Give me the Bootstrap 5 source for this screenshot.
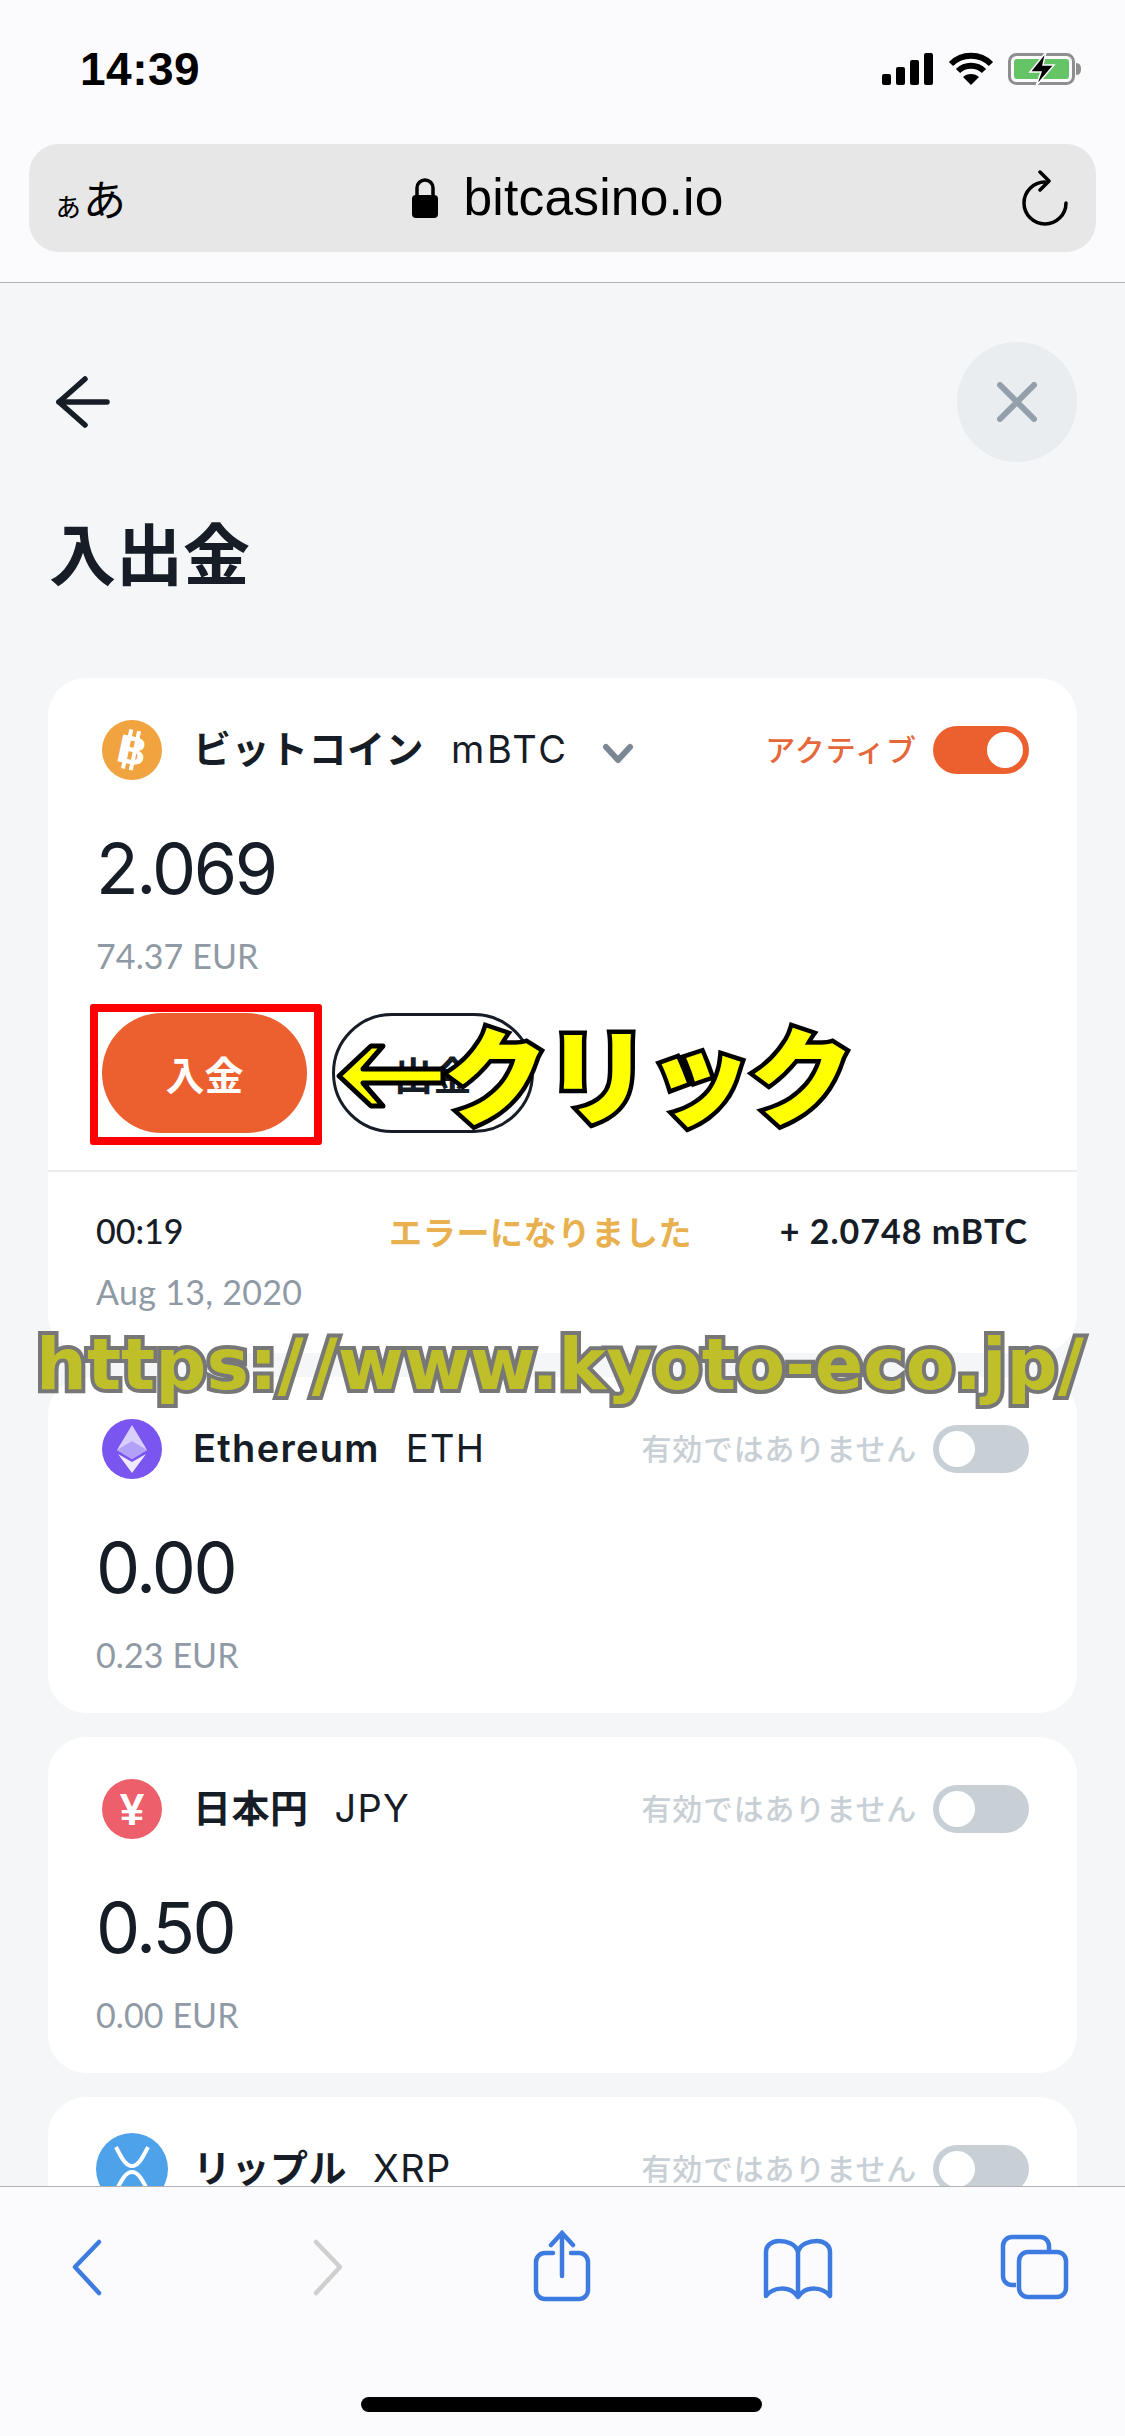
<!DOCTYPE html>
<html lang="ja">
<head>
<meta charset="utf-8">
<title>入出金</title>
<link href="https://cdn.jsdelivr.net/npm/bootstrap@5.3.0/dist/css/bootstrap.min.css" rel="stylesheet">
<style>
html,body{margin:0;background:#f4f6f8;}
body{font-family:"Lato","Noto Sans CJK JP",sans-serif;color:#171d26;}
.phone{width:1125px;height:2436px;overflow:hidden;position:relative;}
.topbar{background:#fbfbfd;height:283px;border-bottom:1px solid #b2b2b4;flex:none;}
.statusrow{height:138px;padding:0 43px 0 80px;margin-bottom:6px;}
.statusicons{gap:14px;}
.clock{font:700 46px/1 "Liberation Sans",sans-serif;color:#000;letter-spacing:.5px;}
.urlbar{margin:0 29px;height:108px;border-radius:30px;background:#e7e7e7;padding:0 27px 0 24px;position:relative;}
.aa{font:400 43px/1 "Noto Sans CJK JP",sans-serif;color:#000;width:70px;white-space:nowrap;margin-top:-2px;}
.aa small{font-size:30px;}
.host{font:400 51.500px/1 "Liberation Sans",sans-serif;color:#000;letter-spacing:.2px;}
.hostwrap{flex:1;gap:24px;margin-left:-9px;}
.content{flex:1;min-height:0;overflow:hidden;padding:59px 48px 0;}
.round-x{width:120px;height:120px;border-radius:50%;background:#e9edf0;border:0;padding:0;}
.backarrow{margin-left:7px;}
.pagetitle{font:700 67px/80px "Noto Sans CJK JP",sans-serif;margin:49px 0 87px 1px;color:#171d26;}
.wallet{border:0;border-radius:38px;background:#fff;margin-bottom:24px;flex:none;}
.wallet-body{padding:42px 48px 38px;}
.wallet-main{padding-bottom:37px;}
.coin{width:72px;height:60px;flex:none;}
.coin-lg{height:72px;margin:-6px 0;}
.coinname{font-family:"Inter","Noto Sans CJK JP",sans-serif;font-size:38px;font-weight:600;line-height:60px;margin-left:25px;letter-spacing:.5px;margin-top:-2px;}
.coinname.latin{letter-spacing:1.300px;}
.coincode{font-family:"Inter","Noto Sans CJK JP",sans-serif;font-size:38px;font-weight:400;line-height:60px;margin-left:26px;margin-top:-2px;letter-spacing:1.300px;}
.coincode.mbtc{letter-spacing:2.600px;margin-left:27px;}
.chev{margin-left:30px;margin-top:8px;}
.state{font:500 30px/40px "Noto Sans CJK JP",sans-serif;margin-right:16px;margin-top:-5px;}
.state-on{color:#e5683a;letter-spacing:1px;}
.state-off{color:#c8d0d6;letter-spacing:.7px;}
.form-check.tgl{padding:0;margin:0;min-height:0;height:48px;}
.form-check-input.tgl-input{width:96px;height:48px;margin:0;border:0;border-radius:24px;background-color:#c8d0d6;float:none;display:block;box-shadow:none;
background-image:url("data:image/svg+xml,%3csvg xmlns='http://www.w3.org/2000/svg' viewBox='-4 -4 8 8'%3e%3ccircle r='3' fill='%23fff'/%3e%3c/svg%3e");}
.form-check-input.tgl-input:checked{background-color:#ec5f2f;}
.amount{font-family:"Inter",sans-serif;font-size:70px;line-height:70px;font-weight:400;margin-top:54px;letter-spacing:-2.500px;}
.fiat{font-size:34px;line-height:40px;color:#8f9aa5;margin-top:32px;letter-spacing:.1px;}
.actions{margin:37px 0 0 6px;gap:25px;position:relative;}
.btn.pay{width:205px;height:120px;border-radius:60px;background:#ec5f2f;border:0;color:#fff;font:700 39px/1 "Noto Sans CJK JP",sans-serif;padding:0;}
.btn.out{width:202px;height:120px;border-radius:60px;background:#fff;border:3px solid #171d26;color:#171d26;font:700 39px/1 "Noto Sans CJK JP",sans-serif;padding:0;}
.redbox{position:absolute;left:-12px;top:-9px;width:232px;height:141px;border:8px solid #f00;border-radius:3px;pointer-events:none;}
.clicknote{position:absolute;left:341px;top:-8px;font:900 105px/130px "Noto Sans CJK JP",sans-serif;color:#ff0;-webkit-text-stroke:9px #000;paint-order:stroke fill;letter-spacing:-3px;white-space:nowrap;}
.clickarrow{position:absolute;left:233px;top:30px;}
.tx{border-top:2px solid #e9edf0;padding:39px 48px 41px;}
.tx-line{font-size:34px;line-height:40px;font-weight:500;}
.tx-time{width:293px;}
.tx-stat{font:700 33px/40px "Noto Sans CJK JP",sans-serif;color:#e9b04f;letter-spacing:.7px;}
.tx-amt{font-weight:700;letter-spacing:1px;margin-right:1px;}
.tx-date{font-size:34px;line-height:40px;color:#8f9aa5;margin-top:21px;letter-spacing:.3px;}
.bottombar{background:#fbfbfd;height:250px;border-top:1px solid #b2b2b4;flex:none;position:relative;}
.tools{display:grid;grid-template-columns:172px 314px 152px 320px 152px;padding-top:43px;}
.tool{height:72px;}
.homebar{width:401px;height:15px;border-radius:8px;background:#000;margin:95px auto 0;transform:translateX(-1px);}
.watermark{position:absolute;left:36px;top:1315px;font:700 71.500px/100px "DejaVu Sans",sans-serif;color:#bfbf2a;-webkit-text-stroke:8px #777;paint-order:stroke fill;white-space:nowrap;}
.slashgap{letter-spacing:8px;}
</style>
</head>
<body>
<div class="phone d-flex flex-column">
  <header class="topbar">
    <div class="statusrow d-flex align-items-center justify-content-between">
      <span class="clock">14:39</span>
      <div class="statusicons d-flex align-items-center">
        <svg width="52" height="32" viewBox="0 0 52 32"><rect x="0" y="21" width="9" height="11" rx="2"/><rect x="14" y="14" width="9" height="18" rx="2"/><rect x="28" y="7" width="9" height="25" rx="2"/><rect x="42" y="0" width="9" height="32" rx="2"/></svg>
        <svg width="46" height="34" viewBox="0 0 46 34" fill="none" stroke="#000" stroke-width="6"><path d="M3 12C14 1 32 1 43 12"/><path d="M10 19C17 12 29 12 36 19"/><path d="M23 33L15 25C19 21 27 21 31 25Z" fill="#000" stroke="none"/></svg>
        <svg width="74" height="34" viewBox="0 0 74 34"><rect x="1.5" y="2.500" width="64" height="29" rx="7" fill="none" stroke="#8e8e8e" stroke-width="3"/><rect x="6" y="7" width="55" height="20" rx="3" fill="#65c466"/><path d="M68 11c4 0 5 3 5 6s-1 6-5 6z" fill="#8e8e8e"/><path d="M38 0 L22 20 H33 L28 34 L46 13 H35Z" fill="#000" stroke="#fbfbfd" stroke-width="1.500"/></svg>
      </div>
    </div>
    <div class="urlbar d-flex align-items-center">
      <span class="aa"><small>ぁ</small>あ</span>
      <div class="hostwrap d-flex align-items-center justify-content-center">
        <svg width="28" height="40" viewBox="0 0 28 40"><path d="M6 18V10a8 8 0 0 1 16 0v8" fill="none" stroke="#000" stroke-width="3.500"/><rect x="1" y="17" width="26" height="23" rx="4"/></svg>
        <span class="host">bitcasino.io</span>
      </div>
      <svg width="48" height="56" viewBox="0 0 48 56" fill="none" stroke="#000" stroke-width="3.500" stroke-linecap="round" stroke-linejoin="round"><path d="M24 12A21 21 0 1 0 45 33"/><path d="M19 2L28 11L19 20"/></svg>
    </div>
  </header>

  <main class="content d-flex flex-column">
    <div class="d-flex align-items-center justify-content-between flex-none">
      <svg class="backarrow" width="56" height="52" viewBox="0 0 56 52" fill="none" stroke="#171d26" stroke-width="5.500" stroke-linecap="round" stroke-linejoin="round"><path d="M52 26H4"/><path d="M30 3L4 26L30 49"/></svg>
      <button class="round-x d-flex align-items-center justify-content-center" type="button" aria-label="閉じる"><svg width="40" height="40" viewBox="0 0 40 40" stroke="#939faa" stroke-width="6" stroke-linecap="round"><path d="M3 3L37 37M37 3L3 37"/></svg></button>
    </div>
    <h1 class="pagetitle">入出金</h1>

    <section class="card wallet">
      <div class="wallet-body wallet-main">
        <div class="d-flex align-items-center">
          <svg class="coin" viewBox="0 0 72 60"><circle cx="36" cy="30" r="30" fill="#f0a33f"/><g transform="rotate(12 36 30)" fill="#fff"><text x="36" y="44" text-anchor="middle" font-family="Liberation Sans" font-weight="700" font-size="40">B</text><rect x="29" y="10" width="4" height="40"/><rect x="37" y="10" width="4" height="40"/></g></svg>
          <span class="coinname">ビットコイン</span><span class="coincode mbtc">mBTC</span>
          <svg class="chev" width="38" height="24" viewBox="0 0 38 24" fill="none" stroke="#7b8894" stroke-width="6" stroke-linecap="round" stroke-linejoin="round"><path d="M7 5L19 18L31 5"/></svg>
          <span class="state state-on ms-auto">アクティブ</span>
          <div class="form-check form-switch tgl"><input class="form-check-input tgl-input" type="checkbox" role="switch" checked aria-label="アクティブ"></div>
        </div>
        <div class="amount">2.069</div>
        <div class="fiat">74.37 EUR</div>
        <div class="actions d-flex">
          <button class="btn pay d-flex align-items-center justify-content-center" type="button">入金</button>
          <button class="btn out d-flex align-items-center justify-content-center" type="button">出金</button>
          <div class="redbox"></div>
          <svg class="clickarrow" width="112" height="66" viewBox="0 0 112 66"><path d="M36 3L4 33L36 63H48L28 40H108V26H28L48 3Z" fill="#ff0" stroke="#000" stroke-width="5" stroke-linejoin="round"/></svg>
          <div class="clicknote">クリック</div>
        </div>
      </div>
      <div class="tx">
        <div class="tx-line d-flex align-items-center">
          <span class="tx-time">00:19</span>
          <span class="tx-stat">エラーになりました</span>
          <span class="tx-amt ms-auto">+ 2.0748 mBTC</span>
        </div>
        <div class="tx-date">Aug 13, 2020</div>
      </div>
    </section>

    <section class="card wallet">
      <div class="wallet-body">
        <div class="d-flex align-items-center">
          <svg class="coin" viewBox="0 0 72 60"><circle cx="36" cy="30" r="30" fill="#7a55f0"/><path d="M36 6L51 31L36 40L21 31Z" fill="#d9cffb"/><path d="M36 22L51 31L36 40L21 31Z" fill="#b3a0f7"/><path d="M22 35L36 43L50 35L36 54Z" fill="#eee9fe"/></svg>
          <span class="coinname latin">Ethereum</span><span class="coincode">ETH</span>
          <span class="state state-off ms-auto">有効ではありません</span>
          <div class="form-check form-switch tgl"><input class="form-check-input tgl-input" type="checkbox" role="switch" aria-label="有効ではありません"></div>
        </div>
        <div class="amount">0.00</div>
        <div class="fiat">0.23 EUR</div>
      </div>
    </section>

    <section class="card wallet">
      <div class="wallet-body">
        <div class="d-flex align-items-center">
          <svg class="coin" viewBox="0 0 72 60"><circle cx="36" cy="30" r="30" fill="#ec5f6b"/><text x="36" y="46" text-anchor="middle" font-family="Liberation Sans" font-weight="700" font-size="44" fill="#fff">¥</text></svg>
          <span class="coinname">日本円</span><span class="coincode">JPY</span>
          <span class="state state-off ms-auto">有効ではありません</span>
          <div class="form-check form-switch tgl"><input class="form-check-input tgl-input" type="checkbox" role="switch" aria-label="有効ではありません"></div>
        </div>
        <div class="amount">0.50</div>
        <div class="fiat">0.00 EUR</div>
      </div>
    </section>

    <section class="card wallet">
      <div class="wallet-body">
        <div class="d-flex align-items-center">
          <svg class="coin coin-lg" viewBox="0 0 72 72"><circle cx="36" cy="36" r="36" fill="#4da2ea"/><path d="M20 14C26 26 30 33 36 33C42 33 46 26 52 14M20 58C26 46 30 39 36 39C42 39 46 46 52 58" fill="none" stroke="#fff" stroke-width="4"/></svg>
          <span class="coinname">リップル</span><span class="coincode">XRP</span>
          <span class="state state-off ms-auto">有効ではありません</span>
          <div class="form-check form-switch tgl"><input class="form-check-input tgl-input" type="checkbox" role="switch" aria-label="有効ではありません"></div>
        </div>
      </div>
    </section>
  </main>

  <footer class="bottombar">
    <div class="tools">
      <div class="tool d-flex justify-content-center"><svg width="36" height="72" viewBox="0 0 36 72" fill="none" stroke="#3e7be0" stroke-width="4.500" stroke-linecap="round" stroke-linejoin="round"><path d="M31 12L7 37L31 63"/></svg></div>
      <div class="tool d-flex justify-content-center"><svg width="36" height="72" viewBox="0 0 36 72" fill="none" stroke="#cfcfcf" stroke-width="4.500" stroke-linecap="round" stroke-linejoin="round"><path d="M5 12L29 37L5 63"/></svg></div>
      <div class="tool d-flex justify-content-center"><svg width="60" height="72" viewBox="0 0 60 72" fill="none" stroke="#3e7be0" stroke-width="4.500" stroke-linecap="round"><path d="M21 23H13a9 9 0 0 0-9 9V60a9 9 0 0 0 9 9H47a9 9 0 0 0 9-9V32a9 9 0 0 0-9-9H39"/><path d="M30 46V4"/><path d="M19 15L30 3L41 15"/></svg></div>
      <div class="tool d-flex justify-content-center"><svg class="mt-2" width="70" height="62" viewBox="0 0 70 62" fill="none" stroke="#3e7be0" stroke-width="4.500" stroke-linejoin="round"><path d="M35 14C33 6 24 3 16 3C8 3 3 8 3 14V58C9 50 26 46 35 59C44 46 61 50 67 58V14C67 8 62 3 54 3C46 3 37 6 35 14V59"/></svg></div>
      <div class="tool d-flex justify-content-center"><svg class="mt-1" width="70" height="66" viewBox="0 0 70 66" fill="none" stroke="#3e7be0" stroke-width="4.500"><path d="M17 51H13a9 9 0 0 1-9-9V12a9 9 0 0 1 9-9H41a9 9 0 0 1 9 9V16"/><rect x="20" y="18" width="47" height="45" rx="9"/></svg></div>
    </div>
    <div class="homebar"></div>
  </footer>

  <div class="watermark">https:<span class="slashgap">/</span>/www.kyoto-eco.jp/</div>
</div>
<script src="https://cdn.jsdelivr.net/npm/bootstrap@5.3.0/dist/js/bootstrap.bundle.min.js"></script>
</body>
</html>
